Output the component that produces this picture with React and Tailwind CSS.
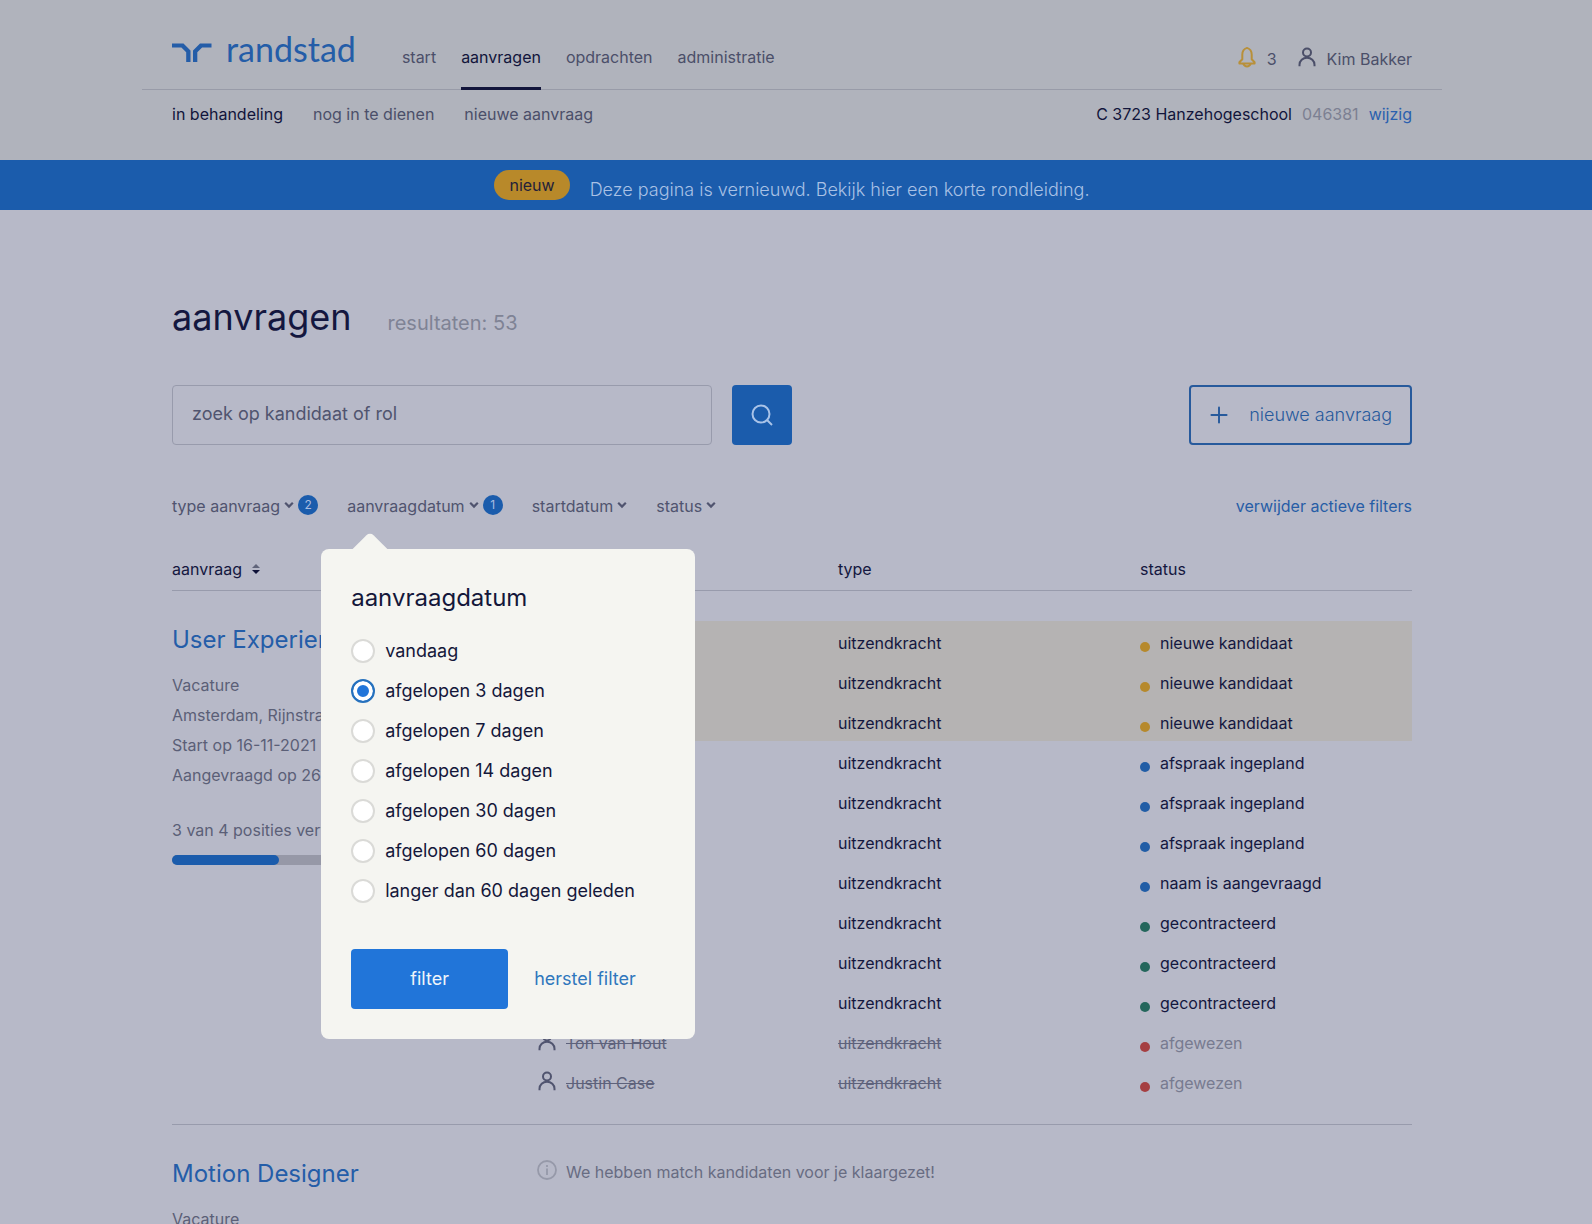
import React from 'react';
import { Plus } from 'lucide-react';

const mainNav = [
  { label: 'start' },
  { label: 'aanvragen', active: true },
  { label: 'opdrachten' },
  { label: 'administratie' }
];

const subNav = [
  { label: 'in behandeling', active: true },
  { label: 'nog in te dienen' },
  { label: 'nieuwe aanvraag' }
];

const dateOptions = [
  'vandaag',
  'afgelopen 3 dagen',
  'afgelopen 7 dagen',
  'afgelopen 14 dagen',
  'afgelopen 30 dagen',
  'afgelopen 60 dagen',
  'langer dan 60 dagen geleden'
];

const statusColors = {
  'nieuwe kandidaat': 'bg-[#b6892c]',
  'afspraak ingepland': 'bg-[#215da6]',
  'naam is aangevraagd': 'bg-[#215da6]',
  gecontracteerd: 'bg-[#24665c]',
  afgewezen: 'bg-[#a53f42]'
};

const candidates = [
  { name: 'Anna de Vries', status: 'nieuwe kandidaat' },
  { name: 'Bas Jansen', status: 'nieuwe kandidaat' },
  { name: 'Carla Smit', status: 'nieuwe kandidaat' },
  { name: 'Daan Visser', status: 'afspraak ingepland' },
  { name: 'Eva Mulder', status: 'afspraak ingepland' },
  { name: 'Frank Bos', status: 'afspraak ingepland' },
  { name: 'Greet Peters', status: 'naam is aangevraagd' },
  { name: 'Hans Dekker', status: 'gecontracteerd' },
  { name: 'Iris Vos', status: 'gecontracteerd' },
  { name: 'Jan Kok', status: 'gecontracteerd' },
  { name: 'Ton van Hout', status: 'afgewezen' },
  { name: 'Justin Case', status: 'afgewezen' }
];

const UserIcon = () => (
  <svg viewBox="0 0 20 20" className="w-5 h-5 shrink-0" fill="none" stroke="currentColor" strokeWidth="2" aria-hidden="true">
    <circle cx="10" cy="5.500" r="4" />
    <path d="M2.500 19.200v-1.400c0-4 3.300-7 7.500-7s7.500 3 7.500 7v1.400" />
  </svg>
);

const BellIcon = () => (
  <svg viewBox="0 0 20 22" className="w-5 h-[22px] shrink-0" fill="none" stroke="currentColor" strokeWidth="2" strokeLinejoin="round" aria-hidden="true">
    <path d="M10 1.900C7 2.900 5.300 5.400 5.300 8.600v4.600l-2.900 3v1.300h15.200v-1.300l-2.900-3V8.600c0-3.200-1.700-5.700-4.700-6.700Z" />
    <path d="M6.300 17.600c.7 1.800 2 2.800 3.700 2.800s3-1 3.700-2.800" />
  </svg>
);

const SearchIcon = () => (
  <svg viewBox="0 0 22 22" className="w-[22px] h-[22px]" fill="none" stroke="currentColor" strokeWidth="2" aria-hidden="true">
    <circle cx="10" cy="10" r="8.5" />
    <path d="m16 16 5 5" />
  </svg>
);

const InfoIcon = () => (
  <svg viewBox="0 0 20 20" className="w-5 h-5 shrink-0 text-[#9699a9]" fill="none" stroke="currentColor" strokeWidth="1.8" aria-hidden="true">
    <circle cx="10" cy="10" r="9" />
    <path d="M10 8.500V15M10 5v1.900" />
  </svg>
);

const ChevronIcon = () => (
  <svg viewBox="0 0 10 8" className="w-[10px] h-2 shrink-0" fill="none" stroke="currentColor" strokeWidth="2.2" aria-hidden="true">
    <path d="m1.200 1.800 3.800 3.800 3.800-3.800" />
  </svg>
);

const SortIcon = () => (
  <svg viewBox="0 0 8 12" className="w-2 h-3" aria-hidden="true">
    <path d="M0 5 4 1l4 4Z" fill="#60647a" />
    <path d="m0 7 4 4 4-4Z" fill="#0f1238" />
  </svg>
);

const Logo = () => (
  <a href="#" className="flex items-start gap-[14px] pt-[29px] text-[#245da8]" aria-label="randstad">
    <svg viewBox="0 0 40 20" className="w-10 h-5 mt-[14px]" fill="currentColor" aria-hidden="true">
      <path d="M0 .5h11.500l7 7V19h-4.300V9.300L9.400 4.400H0Z" />
      <path d="M39.500.5H28l-7 7V19h4.300V9.300l4.800-4.900h9.400Z" />
    </svg>
    <span className="font-['Lato'] font-normal text-[34px] leading-10">randstad</span>
  </a>
);

const FilterButton = ({ label, count, open }) => (
  <button type="button" aria-expanded={open} className="flex items-center leading-6">
    {label}
    <span className="ml-1 -mt-[2px]"><ChevronIcon /></span>
    {count && (
      <span className="ml-1 -mt-[2px] w-5 h-5 rounded-full bg-[#1b5cac] text-[#a9bde0] text-xs leading-5 text-center">{count}</span>
    )}
  </button>
);

const DateFilter = () => (
  <form
    role="dialog"
    aria-label="aanvraagdatum"
    className="absolute z-10 top-[55px] -left-[26px] w-[374px] p-[30px] rounded-lg bg-[#f5f5f1] text-[#14173a] text-lg"
  >
    <div className="absolute -top-3 left-9 w-[26px] h-[26px] rotate-45 rounded-tl-[5px] bg-[#f5f5f1]"></div>
    <h2 className="text-2xl font-normal leading-[38px]">aanvraagdatum</h2>
    <div className="mt-[14px]">
      {dateOptions.map((option, index) => (
        <label key={option} className="flex items-center gap-[10px] h-10">
          <input
            type="radio"
            name="aanvraagdatum"
            defaultChecked={index === 1}
            className="appearance-none w-6 h-6 rounded-full border-2 border-[#dadad7] bg-white checked:border-[#2671bd] checked:bg-[#2175d9] checked:shadow-[inset_0_0_0_4px_white]"
          />
          {option}
        </label>
      ))}
    </div>
    <div className="flex items-center gap-[26px] mt-[38px]">
      <button type="button" className="w-[157px] h-[60px] rounded bg-[#2175d9] text-[#f0f5fa]">filter</button>
      <button type="reset" className="text-[#2f77bd]">herstel filter</button>
    </div>
  </form>
);

const RequestInfo = ({ title, children }) => (
  <div className="pt-[3px] text-[#5b5f77]">
    <h2 className="text-2xl font-normal leading-8 text-[#245da8]"><a href="#">{title}</a></h2>
    <div className="mt-[14px] leading-[30px]">{children}</div>
  </div>
);

const App = () => {
  return (
    <div className="h-screen overflow-hidden bg-[#b7b9c8] text-[#14173f] text-base font-normal font-['Inter',sans-serif]">
      <header className="h-[160px] pr-2 bg-[#b0b3bc] text-[#4b4f69]">
        <div className="max-w-[1300px] mx-auto">
          <div className="flex h-[90px] px-[30px] border-b border-[#989ba8]">
            <Logo />
            <nav className="flex gap-[25px] ml-[46px] h-[90px]">
              {mainNav.map((item) => (
                <a
                  key={item.label}
                  href="#"
                  className={`pt-[45px] leading-6 ${item.active ? 'border-b-[3px] border-[#12153b] text-[#12153b]' : ''}`}
                >
                  {item.label}
                </a>
              ))}
            </nav>
            <div className="flex ml-auto pt-[47px] leading-6">
              <a href="#" className="flex gap-[10px]">
                <span className="text-[#b8903a] -mt-px"><BellIcon /></span>
                3
              </a>
              <a href="#" className="flex gap-[10px] ml-5">
                <UserIcon />
                Kim Bakker
              </a>
            </div>
          </div>
          <div className="flex justify-between px-[30px] pt-3 leading-6">
            <nav className="flex gap-[30px]">
              {subNav.map((item) => (
                <a key={item.label} href="#" className={item.active ? 'text-[#12153b]' : ''}>{item.label}</a>
              ))}
            </nav>
            <div className="flex gap-[10px]">
              <span className="text-[#12153b]">C 3723 Hanzehogeschool</span>
              <span className="text-[#7c8092]">046381</span>
              <a href="#" className="text-[#2a60ae]">wijzig</a>
            </div>
          </div>
        </div>
      </header>

      <div className="flex justify-center gap-5 h-[50px] pt-[10px] pr-2 bg-[#1b5cac]">
        <span className="h-[30px] px-[15px] rounded-full bg-[#b8892a] text-[#23213a] leading-[30px]">nieuw</span>
        <p className="pt-1 text-lg font-light leading-8 text-[#a9c1e5]">Deze pagina is vernieuwd. Bekijk hier een korte rondleiding.</p>
      </div>

      <main className="pr-2">
        <div className="max-w-[1300px] mx-auto px-[30px] pt-[87px]">
          <div className="flex items-baseline gap-9">
            <h1 className="text-4xl leading-10">aanvragen</h1>
            <p className="text-xl text-[#7f8395]">resultaten: 53</p>
          </div>

          <div className="flex mt-12 text-lg">
            <input
              type="text"
              aria-label="zoek op kandidaat of rol"
              placeholder="zoek op kandidaat of rol"
              className="w-[540px] h-[60px] px-[19px] pb-[3px] rounded border border-[#989bac] placeholder:text-[#50546f]"
            />
            <button type="button" aria-label="zoek" className="flex items-center justify-center w-[60px] h-[60px] ml-5 rounded bg-[#1b5cac] text-[#a9c3e8]">
              <SearchIcon />
            </button>
            <button type="button" className="flex items-center gap-[17px] h-[60px] pl-[15px] pr-[18px] ml-auto rounded border-2 border-[#275a9c] font-light text-[#275a9c]">
              <Plus className="w-[26px] h-[26px]" strokeWidth={1.8} />
              nieuwe aanvraag
            </button>
          </div>

          <div className="flex gap-[29px] mt-[49px] text-[#50546f]">
            <FilterButton label="type aanvraag" count={2} />
            <div className="relative">
              <FilterButton label="aanvraagdatum" count={1} open />
              <DateFilter />
            </div>
            <FilterButton label="startdatum" />
            <FilterButton label="status" />
            <button type="button" className="ml-auto leading-6 text-[#275da6]">verwijder actieve filters</button>
          </div>

          <table className="w-full mt-[39px] table-fixed text-left">
            <thead>
              <tr className="border-b border-[#989bac] leading-6">
                <th className="w-[365px] p-0 pb-[9px] font-normal">
                  <button type="button" className="flex items-center gap-[10px]">
                    aanvraag
                    <SortIcon />
                  </button>
                </th>
                <th className="p-0 pb-[9px] font-normal">kandidaat</th>
                <th className="w-[302px] p-0 pb-[9px] font-normal">type</th>
                <th className="w-[272px] p-0 pb-[9px] font-normal">status</th>
              </tr>
            </thead>
            <tbody className="border-b border-[#989bac]">
              <tr className="h-[30px]"><td colSpan={4}></td></tr>
              {candidates.map((candidate, index) => {
                const rejected = candidate.status === 'afgewezen';
                const highlight = candidate.status === 'nieuwe kandidaat' ? 'bg-[#b5b3b3]' : '';
                return (
                  <tr key={candidate.name} className="h-10 leading-6">
                    {index === 0 && (
                      <td rowSpan={candidates.length} className="p-0 align-top">
                        <RequestInfo title="User Experience Designer">
                          <p>Vacature</p>
                          <p>Amsterdam, Rijnstraat</p>
                          <p>Start op 16-11-2021</p>
                          <p>Aangevraagd op 26-10-2021</p>
                          <p className="mt-[25px]">3 van 4 posities vervuld</p>
                          <div className="w-[214px] h-[10px] mt-[10px] rounded-full bg-[#9698a7]">
                            <div className="w-1/2 h-full rounded-full bg-[#1b5cac]"></div>
                          </div>
                        </RequestInfo>
                      </td>
                    )}
                    <td className={`p-0 pt-[10px] pb-[6px] ${highlight}`}>
                      <span className={`flex gap-[9px] ${rejected ? 'text-[#5e627b]' : ''}`}>
                        <span className="text-[#50546f]"><UserIcon /></span>
                        <span className={rejected ? 'line-through' : ''}>{candidate.name}</span>
                      </span>
                    </td>
                    <td className={`p-0 pt-[10px] pb-[6px] ${highlight} ${rejected ? 'text-[#5e627b] line-through' : ''}`}>
                      uitzendkracht
                    </td>
                    <td className={`p-0 pt-[10px] pb-[6px] ${highlight}`}>
                      <span className={`flex gap-[10px] ${rejected ? 'text-[#777b90]' : ''}`}>
                        <span className={`w-[10px] h-[10px] mt-[11px] rounded-full ${statusColors[candidate.status]}`}></span>
                        {candidate.status}
                      </span>
                    </td>
                  </tr>
                );
              })}
              <tr className="h-6"><td colSpan={4}></td></tr>
            </tbody>
            <tbody>
              <tr className="h-[30px]"><td colSpan={4}></td></tr>
              <tr>
                <td className="p-0 align-top">
                  <RequestInfo title="Motion Designer">
                    <p>Vacature</p>
                  </RequestInfo>
                </td>
                <td colSpan={3} className="p-0 pt-[5px] align-top leading-6">
                  <span className="flex gap-[9px] text-[#686c82]">
                    <InfoIcon />
                    We hebben match kandidaten voor je klaargezet!
                  </span>
                </td>
              </tr>
            </tbody>
          </table>
        </div>
      </main>
    </div>
  );
};

export default App;
